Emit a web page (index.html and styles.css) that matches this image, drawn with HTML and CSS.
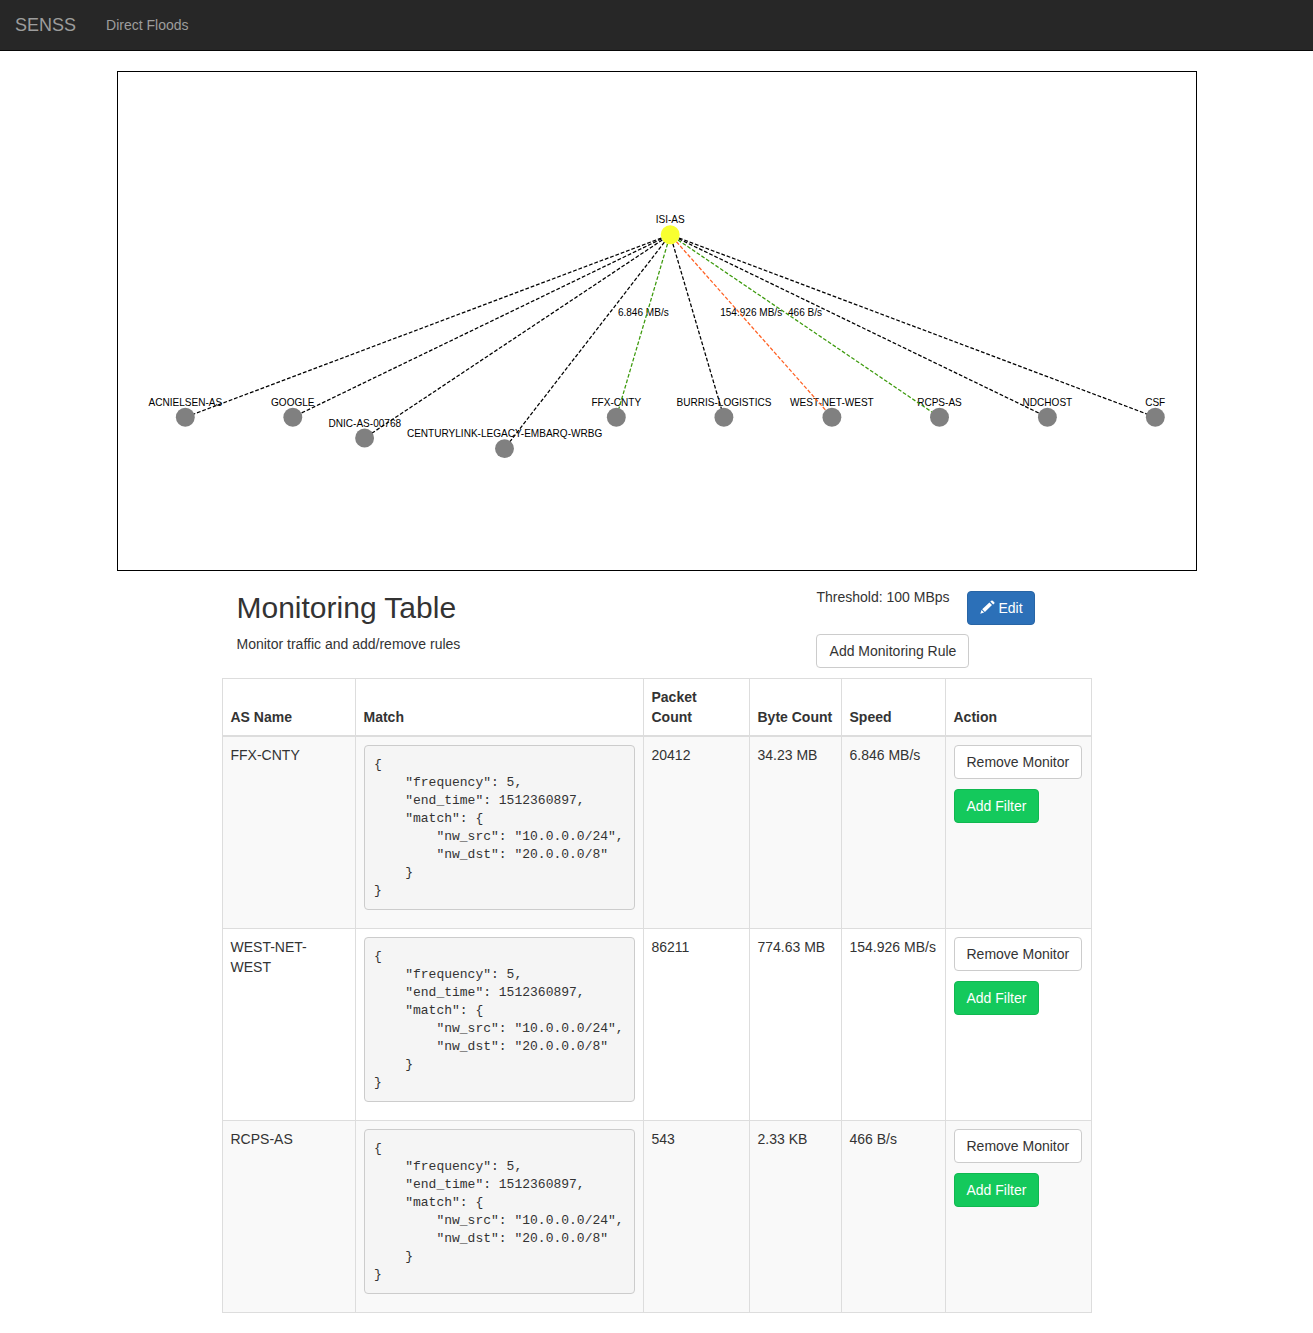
FILE: index.html
```html
<!DOCTYPE html>
<html lang="en">
<head>
<meta charset="utf-8">
<title>SENSS</title>
<link rel="stylesheet" href="styles.css">
</head>
<body>
<nav class="navbar">
  <a class="brand">SENSS</a>
  <a class="nav-link">Direct Floods</a>
</nav>

<div class="topology">
  <svg class="graph" width="1078" height="498" viewBox="118 72 1078 498">
    <g class="labels">
      <text x="670.2" y="223.2">ISI-AS</text>
      <text x="185.3" y="405.8">ACNIELSEN-AS</text>
      <text x="292.8" y="405.8">GOOGLE</text>
      <text x="364.8" y="426.6">DNIC-AS-00768</text>
      <text x="504.6" y="437.3">CENTURYLINK-LEGACY-EMBARQ-WRBG</text>
      <text x="616.3" y="405.8">FFX-CNTY</text>
      <text x="724" y="405.8">BURRIS-LOGISTICS</text>
      <text x="831.9" y="405.8">WEST-NET-WEST</text>
      <text x="939.5" y="405.8">RCPS-AS</text>
      <text x="1047.4" y="405.8">NDCHOST</text>
      <text x="1155.2" y="405.8">CSF</text>
      <text x="643.3" y="316.4">6.846 MB/s</text>
      <text x="751.2" y="316.4">154.926 MB/s</text>
      <text x="805" y="316.4">466 B/s</text>
    </g>
    <g class="links">
      <line x1="670.2" y1="234.7" x2="185.3" y2="417.2"/>
      <line x1="670.2" y1="234.7" x2="292.8" y2="417.2"/>
      <line x1="670.2" y1="234.7" x2="364.6" y2="438"/>
      <line x1="670.2" y1="234.7" x2="504.5" y2="448.6"/>
      <line class="normal" x1="670.2" y1="234.7" x2="616.3" y2="417.2"/>
      <line x1="670.2" y1="234.7" x2="723.9" y2="417.2"/>
      <line class="flood" x1="670.2" y1="234.7" x2="831.9" y2="417.2"/>
      <line class="normal" x1="670.2" y1="234.7" x2="939.5" y2="417.2"/>
      <line x1="670.2" y1="234.7" x2="1047.4" y2="417.2"/>
      <line x1="670.2" y1="234.7" x2="1155.3" y2="417.2"/>
    </g>
    <g class="nodes">
      <circle class="root" cx="670.2" cy="234.7" r="9.45"/>
      <circle cx="185.3" cy="417.2" r="9.45"/>
      <circle cx="292.8" cy="417.2" r="9.45"/>
      <circle cx="364.6" cy="438" r="9.45"/>
      <circle cx="504.5" cy="448.6" r="9.45"/>
      <circle cx="616.3" cy="417.2" r="9.45"/>
      <circle cx="723.9" cy="417.2" r="9.45"/>
      <circle cx="831.9" cy="417.2" r="9.45"/>
      <circle cx="939.5" cy="417.2" r="9.45"/>
      <circle cx="1047.4" cy="417.2" r="9.45"/>
      <circle cx="1155.3" cy="417.2" r="9.45"/>
    </g>
  </svg>
</div>

<main class="monitor">
  <header class="monitor-head">
    <div class="intro">
      <h2>Monitoring Table</h2>
      <p>Monitor traffic and add/remove rules</p>
    </div>
    <div class="controls">
      <div class="threshold">
        <span class="threshold-text">Threshold: 100 MBps</span>
        <button class="btn btn-primary"><svg class="pencil" width="15" height="14" viewBox="0 0 15 14"><path d="M.3 13.8 1.5 10.1 4.1 12.6ZM2.2 9.3 9.4 2.4 12 4.9 4.9 11.9ZM10.3 1.6 11.3.7Q12 .1 12.7.7L14.3 2.2Q14.9 2.9 14.3 3.5L13.2 4.4Z"/></svg>Edit</button>
      </div>
      <button class="btn add-rule">Add Monitoring Rule</button>
    </div>
  </header>

  <table class="rules">
    <colgroup><col class="c-name"><col class="c-match"><col class="c-packets"><col class="c-bytes"><col class="c-speed"><col class="c-action"></colgroup>
    <thead>
      <tr><th>AS Name</th><th>Match</th><th>Packet Count</th><th>Byte Count</th><th>Speed</th><th>Action</th></tr>
    </thead>
    <tbody>
      <tr>
        <td>FFX-CNTY</td>
        <td><pre>{
    "frequency": 5,
    "end_time": 1512360897,
    "match": {
        "nw_src": "10.0.0.0/24",
        "nw_dst": "20.0.0.0/8"
    }
}</pre></td>
        <td>20412</td><td>34.23 MB</td><td>6.846 MB/s</td>
        <td><div class="actions"><button class="btn">Remove Monitor</button><button class="btn btn-success">Add Filter</button></div></td>
      </tr>
      <tr>
        <td>WEST-NET-WEST</td>
        <td><pre>{
    "frequency": 5,
    "end_time": 1512360897,
    "match": {
        "nw_src": "10.0.0.0/24",
        "nw_dst": "20.0.0.0/8"
    }
}</pre></td>
        <td>86211</td><td>774.63 MB</td><td>154.926 MB/s</td>
        <td><div class="actions"><button class="btn">Remove Monitor</button><button class="btn btn-success">Add Filter</button></div></td>
      </tr>
      <tr>
        <td>RCPS-AS</td>
        <td><pre>{
    "frequency": 5,
    "end_time": 1512360897,
    "match": {
        "nw_src": "10.0.0.0/24",
        "nw_dst": "20.0.0.0/8"
    }
}</pre></td>
        <td>543</td><td>2.33 KB</td><td>466 B/s</td>
        <td><div class="actions"><button class="btn">Remove Monitor</button><button class="btn btn-success">Add Filter</button></div></td>
      </tr>
    </tbody>
  </table>
</main>
</body>
</html>
```
FILE: styles.css
```css
* { box-sizing: border-box; }

body {
  margin: 0;
  background: #fff;
  color: #333;
  font: 14px/20px "Liberation Sans", Arial, sans-serif;
}

.navbar {
  display: flex;
  height: 51px;
  margin-bottom: 20px;
  padding-bottom: 1px;
  align-items: center;
  background: #272727;
  border-bottom: 1px solid #080808;
  color: #9d9d9d;
}
.brand { padding: 0 15px; font-size: 18px; }
.nav-link { padding: 0 15px; }

.topology {
  width: 1080px;
  height: 500px;
  margin: 0 auto;
  border: 1px solid #000;
}
.graph { display: block; }
.labels text {
  font-size: 10.06px;
  text-anchor: middle;
  fill: #000;
}
.links line {
  stroke: #000;
  stroke-width: 1.26;
  stroke-dasharray: 3.77 1.89;
  stroke-dashoffset: -9.43;
}
.links .normal { stroke: #3c9a0c; }
.links .flood { stroke: #ff6022; }
.nodes circle { fill: #808080; }
.nodes .root { fill: #f8ff30; }

.monitor { width: 870px; margin: 0 auto; }
.monitor-head {
  display: grid;
  grid-template-columns: 580px 1fr;
  padding: 20px 15px 10px;
}
h2 { margin: 0 0 10px; font-size: 30px; line-height: 33px; font-weight: 500; }
p { margin: 0; }
.controls {
  display: flex;
  flex-direction: column;
  align-items: flex-start;
  gap: 9px;
}
.threshold { display: flex; align-items: flex-start; }
.threshold-text { width: 150px; margin-top: -4px; }

.btn {
  height: 34px;
  padding: 6px 12px;
  border: 1px solid #ccc;
  border-radius: 4px;
  background: #fff;
  color: #333;
  font: inherit;
  white-space: nowrap;
}
.add-rule { width: 153px; margin-left: -0.5px; padding: 6px 11.5px 6px 12.5px; }
.btn-primary {
  display: flex;
  width: 68px;
  gap: 3.9px;
  background: #2c70b8;
  border-color: #2865a5;
  color: #fff;
}
.btn-success { background: #14c95c; border-color: #10b850; color: #fff; }
.pencil { flex: none; margin-top: 2px; fill: #fff; }

.rules {
  width: 870px;
  table-layout: fixed;
  border-collapse: collapse;
  border: 1px solid #ddd;
}
.c-name { width: 133px; }
.c-match { width: 288px; }
.c-packets { width: 106px; }
.c-bytes { width: 92px; }
.c-speed { width: 104px; }
.c-action { width: 146px; }
.rules th,
.rules td {
  padding: 8px;
  border: 1px solid #ddd;
  text-align: left;
  vertical-align: top;
}
.rules th { vertical-align: bottom; border-bottom-width: 2px; }
.rules tbody tr:nth-child(odd) { background: #f9f9f9; }

pre {
  margin: 0 0 10px;
  padding: 9.5px;
  border: 1px solid #ccc;
  border-radius: 4px;
  background: #f5f5f5;
  font: 13px/18px "Liberation Mono", "Courier New", monospace;
}
.actions {
  display: flex;
  flex-direction: column;
  align-items: flex-start;
  gap: 10px;
}
```
